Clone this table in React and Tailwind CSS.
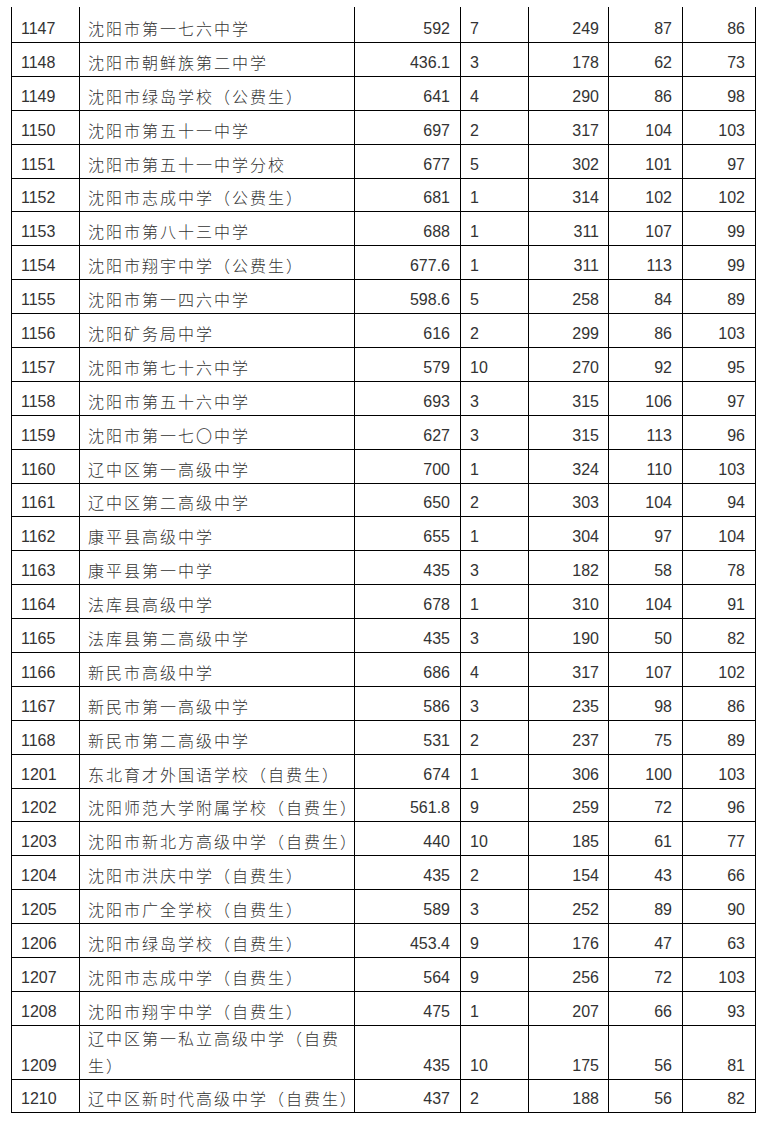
import React from 'react';

const rows = [
  ['1147', '沈阳市第一七六中学', '592', '7', '249', '87', '86'],
  ['1148', '沈阳市朝鲜族第二中学', '436.1', '3', '178', '62', '73'],
  ['1149', '沈阳市绿岛学校（公费生）', '641', '4', '290', '86', '98'],
  ['1150', '沈阳市第五十一中学', '697', '2', '317', '104', '103'],
  ['1151', '沈阳市第五十一中学分校', '677', '5', '302', '101', '97'],
  ['1152', '沈阳市志成中学（公费生）', '681', '1', '314', '102', '102'],
  ['1153', '沈阳市第八十三中学', '688', '1', '311', '107', '99'],
  ['1154', '沈阳市翔宇中学（公费生）', '677.6', '1', '311', '113', '99'],
  ['1155', '沈阳市第一四六中学', '598.6', '5', '258', '84', '89'],
  ['1156', '沈阳矿务局中学', '616', '2', '299', '86', '103'],
  ['1157', '沈阳市第七十六中学', '579', '10', '270', '92', '95'],
  ['1158', '沈阳市第五十六中学', '693', '3', '315', '106', '97'],
  ['1159', '沈阳市第一七〇中学', '627', '3', '315', '113', '96'],
  ['1160', '辽中区第一高级中学', '700', '1', '324', '110', '103'],
  ['1161', '辽中区第二高级中学', '650', '2', '303', '104', '94'],
  ['1162', '康平县高级中学', '655', '1', '304', '97', '104'],
  ['1163', '康平县第一中学', '435', '3', '182', '58', '78'],
  ['1164', '法库县高级中学', '678', '1', '310', '104', '91'],
  ['1165', '法库县第二高级中学', '435', '3', '190', '50', '82'],
  ['1166', '新民市高级中学', '686', '4', '317', '107', '102'],
  ['1167', '新民市第一高级中学', '586', '3', '235', '98', '86'],
  ['1168', '新民市第二高级中学', '531', '2', '237', '75', '89'],
  ['1201', '东北育才外国语学校（自费生）', '674', '1', '306', '100', '103'],
  ['1202', '沈阳师范大学附属学校（自费生）', '561.8', '9', '259', '72', '96'],
  ['1203', '沈阳市新北方高级中学（自费生）', '440', '10', '185', '61', '77'],
  ['1204', '沈阳市洪庆中学（自费生）', '435', '2', '154', '43', '66'],
  ['1205', '沈阳市广全学校（自费生）', '589', '3', '252', '89', '90'],
  ['1206', '沈阳市绿岛学校（自费生）', '453.4', '9', '176', '47', '63'],
  ['1207', '沈阳市志成中学（自费生）', '564', '9', '256', '72', '103'],
  ['1208', '沈阳市翔宇中学（自费生）', '475', '1', '207', '66', '93'],
  ['1209', ['辽中区第一私立高级中学（自费', '生）'], '435', '10', '175', '56', '81'],
  ['1210', '辽中区新时代高级中学（自费生）', '437', '2', '188', '56', '82'],
];

// row heights follow the scan: first row is cut at the top, 1209 wraps
function rowHeight(i, id) {
  if (i === 0) return 'h-[36px]';
  if (id === '1209') return 'h-[54px]';
  if (id === '1210') return 'h-[33px]';
  return 'h-[33.9px]';
}

const cell = 'flex items-end border-r border-black leading-[27px] text-[16px]';

function Row({ row, i }) {
  const [id, name, score, count, a, b, c] = row;
  return (
    <div className={`flex border-b border-black ${rowHeight(i, id)}`}>
      <div className={`${cell} w-[68px] pl-[9px]`}>{id}</div>
      <div
        className={`${cell} w-[275px] pl-[8px] text-[15px] tracking-[2px]`}
        style={{ fontFamily: '"Noto Sans CJK SC", "Liberation Sans", sans-serif', fontWeight: 300 }}
      >
        <span>
          {Array.isArray(name) ? (
            <>
              {name[0]}
              <br />
              {name[1]}
            </>
          ) : (
            name
          )}
        </span>
      </div>
      <div className={`${cell} w-[106px] justify-end pr-[10px]`}>{score}</div>
      <div className={`${cell} w-[68px] pl-[9px]`}>{count}</div>
      <div className={`${cell} w-[80px] justify-end pr-[9px]`}>{a}</div>
      <div className={`${cell} w-[74px] justify-end pr-[10px]`}>{b}</div>
      <div className={`${cell} w-[73px] justify-end pr-[10px]`}>{c}</div>
    </div>
  );
}

function App() {
  return (
    <div
      className="w-[768px] h-[1122px] bg-white pt-[7px] pl-[11px] text-[#333333] overflow-hidden"
      style={{ fontFamily: '"Liberation Sans", "Noto Sans CJK SC", sans-serif' }}
    >
      <div className="w-[745px] border-l border-black">
        {rows.map((row, i) => (
          <Row key={row[0]} row={row} i={i} />
        ))}
      </div>
    </div>
  );
}

export default App;
